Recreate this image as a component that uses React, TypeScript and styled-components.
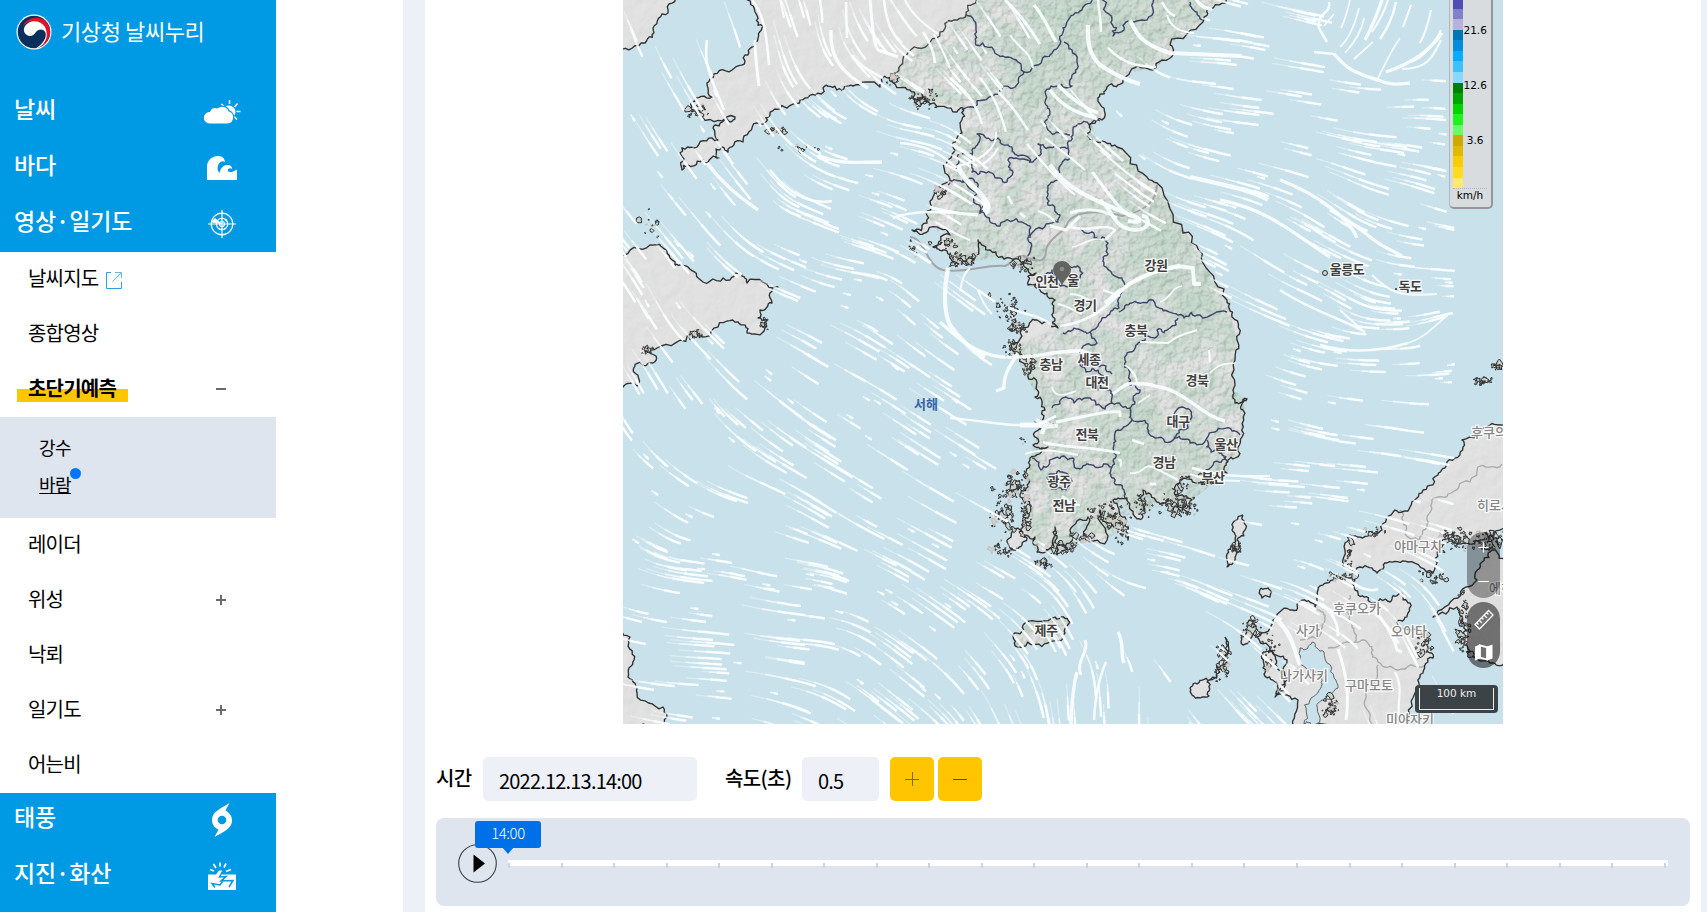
import React, { useMemo } from 'react';
import styled, { createGlobalStyle, css } from 'styled-components';

type Point = [number, number];

const createRandom = (seed: number) => {
  let value = seed;
  return () => {
    value = (value * 16807) % 2147483647;
    return value / 2147483647;
  };
};

const parse = (points: string): Point[] =>
  points.split(' ').map((p) => p.split(',').map(Number) as Point);

// subdivides a coarse outline so it looks like a surveyed coast
const roughen = (points: Point[], amount: number, seed: number): Point[] => {
  const random = createRandom(seed * 7919);
  random();
  let result = points;
  for (let step = 0; step < 3; step++) {
    const next: Point[] = [];
    for (let i = 0; i < result.length - 1; i++) {
      const [ax, ay] = result[i];
      const [bx, by] = result[i + 1];
      const length = Math.hypot(bx - ax, by - ay);
      next.push(result[i]);
      if (length > 3.2) {
        const shift = (random() - 0.5) * Math.min(length, 14) * amount;
        next.push([
          (ax + bx) / 2 - ((by - ay) / length) * shift,
          (ay + by) / 2 + ((bx - ax) / length) * shift,
        ]);
      }
    }
    next.push(result[result.length - 1]);
    result = next;
  }
  return result;
};

const toPath = (points: Point[]) =>
  'M' + points.map(([x, y]) => `${x.toFixed(1)},${y.toFixed(1)}`).join('L');

const MAINLAND =
  '740,-4 755,12 763,26 755,42 745,55 732,70 710,79 708,88 712,97 692,102 692,112 702,117 735,117 723,120 713,128 718,140 697,147 680,153 682,170 688,165 707,163 719,158 716,149 722,147 728,152 743,142 757,123 770,115 787,108 805,98 823,88 837,90 853,86 880,87 889,78 893,80 910,90 917,103 923,92 930,104 957,112 963,108 960,123 962,133 953,147 945,173 952,183 933,197 926,213 927,223 912,230 928,231 950,235 933,247 945,250 957,263 975,257 978,240 990,250 1010,258 1024,262 1036,273 1028,285 1040,290 1047,293 1055,300 1053,317 1058,328 1037,320 1023,327 1010,347 1016,352 1023,363 1028,377 1037,383 1035,397 1045,410 1035,422 1055,427 1035,432 1033,445 1048,447 1030,458 1023,475 1028,487 1022,498 1029,510 1023,527 1035,537 1037,552 1050,548 1055,527 1057,545 1067,550 1070,530 1088,517 1080,540 1107,540 1100,510 1110,523 1128,540 1125,517 1113,500 1127,498 1133,514 1143,517 1143,490 1157,502 1170,503 1187,515 1192,500 1175,495 1180,480 1197,483 1215,483 1227,473 1228,460 1235,458 1242,437 1243,410 1247,399 1235,403 1233,390 1236,350 1237,340 1232,317 1227,300 1203,263 1183,233 1157,183 1147,177 1117,147 1097,142 1090,132 1092,123 1102,120 1098,98 1107,87 1123,80 1130,72 1153,70 1173,52 1170,45 1203,22 1207,10 1229,-4';

const KOREA =
  '889,78 900,66 918,48 940,32 962,18 982,-4 1229,-4 1207,10 1203,22 1170,45 1173,52 1153,70 1130,72 1107,87 1098,98 1102,120 1092,123 1097,142 1117,147 1147,177 1157,183 1203,263 1227,300 1237,340 1233,390 1247,399 1242,437 1227,473 1192,500 1143,510 1107,540 1037,552 1023,527 1030,458 1045,410 1010,347 1058,328 1047,293 1010,258 957,263 926,213 952,183 945,173 962,133 963,108 917,98';

const COASTS = [
  '680,-4 668,13 653,28 645,43 619,51 619,-4',
  '619,253 650,245 662,247 675,265 688,267 703,282 730,280 738,273 747,283 778,287 770,293 772,303 760,310 758,318 767,320 765,328 747,333 738,322 727,321 702,337 692,333 657,348 645,350 656,356 653,363 640,362 635,373 637,386 619,389',
  '619,618 630,637 634,660 628,677 637,693 663,707 667,728 619,728',
  '1507,423 1490,425 1462,440 1463,447 1447,462 1438,475 1423,490 1410,507 1395,510 1382,530 1370,535 1350,535 1345,543 1350,570 1360,567 1377,573 1387,563 1408,562 1433,573 1442,547 1453,532 1463,543 1480,540 1507,530',
  '1353,577 1333,580 1318,590 1315,607 1300,601 1290,610 1273,620 1257,637 1270,650 1287,660 1287,680 1275,697 1298,700 1290,728 1409,728 1415,693 1423,673 1433,658 1428,647 1423,632 1397,622 1408,613 1410,603 1400,593 1390,602 1370,602 1358,593 1355,580 1353,577',
  '1507,566 1492,550 1482,562 1477,580 1458,598 1433,617 1457,607 1462,620 1462,640 1473,657 1490,663 1507,662',
  '1013,635 1025,623 1055,617 1070,622 1065,633 1048,643 1022,647 1013,635',
  '1243,515 1246,528 1237,540 1240,548 1233,563 1227,567 1228,550 1234,543 1232,530 1243,515',
  '1225,637 1225,660 1228,664 1217,677 1207,682 1209,696 1192,695 1195,683 1210,680 1223,660 1225,637',
  '1263,652 1270,650 1274,665 1284,680 1276,694 1273,680 1263,668 1263,652',
  '1007,540 1020,530 1027,538 1022,545 1010,548 1007,540',
  '1261,588 1268,588 1270,597 1262,598 1261,588',
  '1249,620 1254,624 1250,640 1243,645 1247,632 1249,620',
];

const BAYS = [
  '1300,648 1312,642 1324,652 1334,678 1338,688 1322,700 1316,724 1304,724 1310,700 1322,684 1318,672 1306,668 1300,648',
];

// province and state borders
const BORDERS = [
  '966,15 976,30 976,45 998,55 1008,57 1024,72 1013,88 1000,90 984,100 962,110',
  '1024,72 1042,60 1054,50 1062,35 1067,22 1082,10 1092,-4',
  '1102,-4 1112,20 1113,36 1124,30 1126,22 1147,20 1155,-4',
  '1064,42 1072,50 1077,60 1072,75 1072,86 1051,86 1046,105 1048,118 1048,130 1062,134 1070,135',
  '1190,2 1197,12 1203,20',
  '1100,121 1078,124 1073,133 1068,148 1055,146 1038,144 1038,156 1030,162 1018,156 1008,145 998,138 985,137 977,134 975,148 972,160 972,172 984,172 1000,178 1007,182 1013,172 1008,160 1016,158 1030,163',
  '972,154 958,155 956,168 962,182 974,180 979,192 980,212 990,222 1000,226 1022,222 1030,226 1028,240 1028,256',
  '948,185 962,182 977,194 980,214',
  '1068,148 1068,160 1060,166 1058,178 1048,190 1048,205 1060,215 1058,222 1046,224 1030,238',
  '1080,228 1092,232 1094,238 1108,243 1108,254 1104,266 1112,274 1122,278 1121,290 1119,308 1108,315 1090,332 1078,329 1063,333',
  '1119,312 1132,303 1155,303 1167,311 1184,318 1200,315 1227,312',
  '1090,332 1097,343 1082,348 1080,365 1086,372 1098,370 1105,378 1098,390 1110,390 1112,403',
  '1178,318 1170,328 1157,330 1155,338 1140,342 1130,352 1125,360 1130,372 1129,384 1140,390 1135,402 1130,408 1112,403 1105,409 1096,405 1090,398 1074,403 1066,397 1052,408',
  '1130,408 1132,420 1118,430 1114,445 1116,455 1112,467 1095,467 1080,469 1073,458 1064,456 1055,458 1048,466 1041,470 1032,458',
  '1112,467 1114,478 1124,490 1125,498',
  '1132,420 1148,424 1155,438 1175,438 1190,443 1207,438 1215,432 1232,431 1240,435',
  '1207,440 1211,452 1224,456 1228,462',
  '1174,415 1182,407 1190,410 1188,428 1174,438',
  '1082,365 1090,360 1106,366 1112,374',
  '1047,478 1052,474 1066,473 1072,481 1066,490 1052,489 1047,478',
  '1040,278 1052,270 1060,286 1068,287 1080,278 1080,268 1068,266',
  '1198,475 1206,470 1214,462 1226,456',
];

const FAINT_BORDERS = [
  '1400,510 1405,532 1420,540 1428,522 1432,500 1448,494 1470,482 1480,466 1502,464',
  '1350,595 1347,612 1352,625 1355,642 1364,640 1373,650 1378,662 1398,670 1425,665',
  '1328,648 1340,645 1355,642',
  '1378,665 1375,682 1365,700 1372,724',
  '1316,608 1325,620 1320,635 1300,640',
];

const DMZ =
  'M910,237 C925,238 926,266 943,270 C965,274 985,264 1005,266 C1015,262 1012,256 1024,256 C1036,262 1046,264 1046,250 C1048,238 1066,232 1068,222 C1078,208 1110,212 1122,216 C1145,212 1157,200 1157,185';

const ISLANDS: [number, number, number, number, number][] = [
  [962, 259, 12, 6, 46],
  [945, 243, 12, 5, 16],
  [1023, 263, 12, 7, 34],
  [1008, 306, 15, 12, 34],
  [1018, 326, 9, 7, 34],
  [1014, 348, 8, 10, 30],
  [1029, 365, 6, 11, 26],
  [1015, 485, 12, 12, 54],
  [1026, 510, 4, 24, 36],
  [1002, 515, 12, 20, 36],
  [1005, 550, 12, 6, 22],
  [1060, 548, 14, 5, 40],
  [1044, 563, 9, 5, 26],
  [1085, 537, 14, 4, 20],
  [1108, 515, 20, 12, 50],
  [1122, 530, 7, 12, 26],
  [1143, 505, 10, 12, 26],
  [1178, 505, 16, 9, 76],
  [1182, 484, 8, 8, 18],
  [1208, 482, 10, 4, 18],
  [922, 100, 14, 9, 34],
  [893, 80, 5, 5, 14],
  [778, 131, 10, 3, 18],
  [797, 148, 20, 3, 10],
  [698, 110, 10, 6, 22],
  [650, 225, 12, 14, 12],
  [913, 250, 4, 9, 10],
  [1235, 547, 5, 4, 26],
  [1222, 665, 6, 16, 34],
  [1250, 630, 10, 10, 28],
  [1270, 650, 9, 16, 24],
  [1455, 540, 14, 11, 54],
  [1490, 540, 14, 9, 60],
  [1435, 577, 12, 5, 24],
  [1463, 620, 6, 30, 44],
  [1425, 645, 8, 12, 26],
  [1330, 705, 9, 10, 34],
  [1375, 531, 10, 4, 14],
  [1340, 577, 14, 4, 18],
  [1350, 555, 4, 16, 14],
  [1484, 381, 7, 4, 26],
  [1498, 367, 4, 4, 12],
  [940, 191, 7, 6, 18],
  [1020, 442, 7, 4, 4],
  [765, 326, 5, 6, 10],
  [695, 334, 6, 4, 18],
  [648, 350, 6, 4, 14],
];

const TREND: [number, number, number, number][] = [
  [650, 10, 1, 2.5],
  [720, 20, 1, 2.8],
  [670, 110, 1, 1.7],
  [740, 110, 1, 1.8],
  [760, 50, 0.2, 1],
  [830, 20, 0.15, 1],
  [845, 80, 1, 1.2],
  [880, 30, 0.6, 1],
  [910, 70, 1, 0.6],
  [850, 125, 1, 0.45],
  [750, 180, 1, 1.3],
  [700, 170, 1, 1.4],
  [800, 230, 1, 0.35],
  [860, 160, 1, 0.15],
  [910, 130, 1, 0.15],
  [680, 220, 1, 1.2],
  [660, 300, 1, 1.9],
  [700, 320, 1, 1],
  [780, 300, 1, 0.4],
  [850, 275, 1, 0.15],
  [910, 310, 1, 0.9],
  [650, 400, 1, 2],
  [700, 400, 1, 1.3],
  [760, 400, 1, 0.8],
  [850, 370, 1, 0.55],
  [900, 430, 1, 0.65],
  [650, 510, 1, 0.7],
  [740, 520, 1, 0.3],
  [830, 500, 1, 0.65],
  [700, 570, 1, 0.1],
  [800, 575, 1, 0.15],
  [880, 560, 1, 0.5],
  [930, 610, 1, 0.7],
  [700, 660, 1, 0.05],
  [800, 630, 1, 0.08],
  [890, 680, 1, 0.8],
  [960, 540, 1, 0.5],
  [1000, 580, 1, 0.55],
  [990, 650, 1, 1.2],
  [1020, 700, 1, 2.6],
  [1070, 700, 0, 1],
  [1130, 700, -0.1, 1],
  [1090, 620, 0.5, 1],
  [1180, 630, 1, 0.5],
  [1150, 570, 1, 0.15],
  [1250, 590, 1, 0.35],
  [1260, 550, 1, 0.15],
  [1280, 490, 1, 0.03],
  [1350, 470, 1, 0.08],
  [1400, 420, 1, 0.15],
  [1300, 400, 1, 0.3],
  [1260, 350, 1, 0.45],
  [1350, 370, 1, 0.06],
  [1380, 345, 1, -0.05],
  [1435, 340, 1, -0.45],
  [1430, 400, 1, 0.02],
  [1260, 250, 1, 0.65],
  [1340, 300, 1, 0.6],
  [1220, 180, 1, 0.25],
  [1330, 210, 1, 0.7],
  [1250, 120, 1, 0.1],
  [1200, 60, 1, 0.03],
  [1300, 100, 1, 0.15],
  [1300, 150, 1, 0.25],
  [1400, 110, 1, -0.05],
  [1410, 150, 1, 0.15],
  [1430, 190, 1, 0.35],
  [1430, 270, 1, 0.08],
  [1340, 610, 1, 0.6],
  [1380, 680, 0.3, 1],
  [1200, 690, 0.8, 1],
  [1430, 640, 0.5, 1],
  [1420, 500, 1, 0.3],
  [1240, 660, 1, 1],
  [1020, 40, 1, 1.8],
  [950, 50, 1, 1.6],
  [1000, 110, 1, 1.2],
  [1090, 60, 1, 1.8],
  [1130, 40, 1, 0.9],
  [1060, 120, 1, 1.1],
  [1100, 170, 1, 0.9],
];

const trendAt = (x: number, y: number): Point => {
  let sx = 0;
  let sy = 0;
  TREND.forEach(([px, py, dx, dy]) => {
    const length = Math.hypot(dx, dy);
    const weight = 1 / Math.pow((px - x) ** 2 + (py - y) ** 2 + 400, 1.5);
    sx += (dx / length) * weight;
    sy += (dy / length) * weight;
  });
  const total = Math.hypot(sx, sy);
  return [sx / total, sy / total];
};

const isCalm = (x: number, y: number) => {
  if (x > 1430) return y < 220 || y > 400;
  if (x > 1300 && y < 75) return true;
  if (x > 955 && x < 1085 && y > 125 && y < 515) return true;
  if (x > 965 && x < 1232 && y > 185 && y < 515) {
    return x > 1000 && !(x > 1150 && y < 205 + (x - 1150) * 1.2);
  }
  if (x > 930 && x < 1010 && y > 170 && y < 270) return true;
  return x > 1090 && x < 1190 && y > 590 && y < 640;
};

const isInland = (x: number, y: number) =>
  (x > 900 && x < 1170 - y * 0.5 && y < 125) || (x > 1310 && x < 1430 && y > 600);

const trace = (startX: number, startY: number, length: number) => {
  let x = startX;
  let y = startY;
  const line: Point[] = [[x, y]];
  for (let travelled = 0; travelled < length; travelled += 4) {
    const [dx, dy] = trendAt(x, y);
    x += dx * 4;
    y += dy * 4;
    if (x > 1455 || (x > 1447 && y < 215)) break;
    line.push([x, y]);
  }
  return line;
};

const buildStreaks = () => {
  const random = createRandom(20221213);
  const streaks: Point[][] = [];
  for (let gy = -20; gy < 730; gy += 26) {
    for (let gx = 605; gx < 1445; gx += 34) {
      const x = gx + random() * 40;
      const y = gy + random() * 34;
      const base = 24 + random() * 36;
      const skip = random();
      const siblings = 1 + Math.floor(random() * 2.9);
      const thin = isInland(x, y) ? 0.72 : x < 760 && y < 620 ? 0.38 : 0.1;
      if (isCalm(x, y) || skip < thin) continue;
      const [dx, dy] = trendAt(x, y);
      for (let i = 0; i < siblings; i++) {
        const side = i * (3.5 + random() * 5);
        const along = (random() - 0.3) * 26;
        const length = random() < 0.12 ? 7 : base * (0.7 + random() * 0.5);
        const line = trace(x - dy * side + dx * along, y + dx * side + dy * along, length);
        if (line.length > 2) streaks.push(line);
      }
    }
  }
  return streaks;
};

const GUSTS: [string, number][] = [
  ['M948,268 C944,290 943,310 950,325 C960,340 972,350 985,357', 5],
  ['M970,268 C962,275 962,283 960,291', 2.5],
  ['M978,290 C982,302 986,308 992,314', 2.5],
  ['M1018,353 C1010,366 1003,375 1004,388 L996,391', 4],
  ['M940,322 C965,345 985,360 1018,357 C1040,357 1060,350 1079,351', 4],
  ['M1079,350 L1092,355', 5],
  ['M1060,326 C1090,322 1105,308 1118,295 C1130,280 1145,272 1180,267', 3],
  ['M1105,303 C1125,285 1145,272 1178,266 L1193,268 L1194,284 L1201,284', 4.5],
  ['M1160,302 C1172,298 1170,288 1182,286', 2],
  ['M1070,294 C1080,294 1085,298 1092,302', 2.5],
  ['M1103,290 L1120,296', 2.5],
  ['M1058,304 C1068,306 1075,311 1082,314', 2.5],
  ['M1009,308 C1025,315 1040,315 1052,325', 3],
  ['M958,165 C963,185 985,190 986,206', 6],
  ['M982,200 C988,203 988,209 984,212', 9],
  ['M958,166 C985,160 998,145 996,132', 2.5],
  ['M983,164 C990,160 994,155 998,148', 2.5],
  ['M900,143 C925,145 942,153 956,168', 3],
  ['M1008,196 L1012,204', 3],
  ['M1020,213 L1025,217', 3],
  ['M1038,211 C1048,214 1052,218 1055,222', 2.5],
  ['M1050,165 C1070,195 1110,205 1130,215 C1145,220 1140,223 1128,221', 5],
  ['M1100,200 C1115,212 1112,228 1135,230 C1151,230 1151,216 1142,216', 4.5],
  ['M1092,172 C1108,192 1115,205 1130,216', 3.5],
  ['M1070,213 C1085,208 1100,208 1117,218', 3.5],
  ['M1070,227 C1090,233 1105,222 1115,230 L1105,240', 3],
  ['M1072,247 C1085,245 1090,236 1104,240', 2],
  ['M1027,144 C1040,160 1055,178 1075,195', 2.5],
  ['M1045,138 C1058,148 1068,155 1085,170', 2.5],
  ['M1115,174 L1140,192', 2.5],
  ['M1100,150 L1128,174', 2.5],
  ['M1050,226 L1066,230 L1080,216', 3.5],
  ['M930,207 C950,214 970,214 978,215', 4],
  ['M893,218 C915,210 935,212 960,213', 3],
  ['M935,222 C950,230 958,236 970,240', 2.5],
  ['M1088,25 C1087,45 1090,55 1100,65 C1115,75 1125,80 1140,84', 5],
  ['M1130,20 C1138,38 1145,45 1170,53 L1242,56', 5],
  ['M1108,48 C1122,62 1135,67 1156,67', 3],
  ['M1098,-2 C1098,8 1101,18 1101,32', 3],
  ['M1162,2 C1166,10 1170,14 1175,16', 3],
  ['M1195,-2 C1200,6 1205,9 1212,9', 4],
  ['M1167,15 C1170,26 1178,32 1194,33', 2.5],
  ['M1050,90 C1063,108 1080,114 1096,118', 4],
  ['M1058,85 C1072,100 1085,108 1098,113', 4],
  ['M950,78 C965,90 975,100 982,124', 3],
  ['M980,78 C992,92 1000,110 1006,132', 3],
  ['M998,92 C1010,103 1018,115 1028,130', 3],
  ['M1010,35 C1020,50 1030,50 1033,68', 2.5],
  ['M1005,0 C1018,12 1028,25 1040,44', 3.5],
  ['M1034,5 C1045,18 1048,28 1056,42', 4],
  ['M923,32 C930,42 934,52 935,63', 3],
  ['M934,34 C942,48 946,58 950,68', 2.5],
  ['M831,30 C829,60 845,75 868,88', 4],
  ['M852,55 C858,65 868,70 883,78', 3],
  ['M870,0 C873,30 873,42 878,50 L898,57', 3.5],
  ['M884,0 C886,20 892,35 902,43', 3],
  ['M905,0 C912,15 925,25 938,34', 2.5],
  ['M846,2 L847,38', 3],
  ['M820,0 C821,10 823,15 822,23', 3],
  ['M752,0 C765,15 767,40 769,65', 3],
  ['M755,40 C755,58 757,70 759,86', 3.5],
  ['M707,40 C703,65 712,80 724,110', 3],
  ['M780,-2 L784,18', 2.5],
  ['M707,163 C722,183 738,196 758,210', 4],
  ['M770,170 C790,195 810,205 832,201', 3],
  ['M818,155 C840,165 855,162 882,162', 4],
  ['M1052,387 C1055,400 1068,394 1076,391', 2],
  ['M1113,394 C1125,385 1128,382 1132,384', 3.5],
  ['M1132,384 C1145,383 1150,384 1155,386 C1185,390 1200,415 1225,421', 4],
  ['M1125,365 C1135,372 1137,380 1137,384', 2.5],
  ['M1138,403 L1150,395', 2],
  ['M1056,422 C1080,418 1105,410 1120,412 L1120,417', 3.5],
  ['M950,418 C980,420 1010,428 1040,424 L1056,416', 3],
  ['M1020,425 L1042,425', 6],
  ['M1036,420 L1046,424 L1056,426 L1044,427 L1042,434', 5],
  ['M1043,442 C1060,448 1090,446 1120,453', 3],
  ['M1025,454 C1045,447 1060,452 1078,455', 2.5],
  ['M1118,460 C1122,458 1121,466 1120,466', 3],
  ['M1130,473 C1145,475 1142,462 1155,468 L1178,480', 2.5],
  ['M1192,468 C1210,472 1225,478 1270,476', 3],
  ['M1190,474 C1205,480 1215,480 1240,481', 2.5],
  ['M1210,373 C1220,362 1228,364 1236,363', 2],
  ['M1209,350 L1210,362', 2.5],
  ['M1132,440 L1144,444', 3],
  ['M1150,484 L1156,484', 3],
  ['M1062,496 C1068,500 1070,505 1080,505', 3],
  ['M1140,342 L1168,343 C1180,333 1190,333 1197,330', 2.5],
  ['M1275,618 C1290,630 1295,650 1300,665', 5],
  ['M1338,649 C1345,670 1350,690 1346,720', 3.5],
  ['M1322,604 C1335,615 1338,625 1338,636', 3.5],
  ['M1375,610 C1390,630 1395,640 1397,650 L1402,652', 3.5],
  ['M1395,672 C1405,690 1395,705 1400,722', 2.5],
  ['M1355,585 C1365,590 1372,592 1378,589', 3],
  ['M1085,640 C1090,652 1075,660 1081,675', 3.5],
  ['M1077,672 C1072,690 1072,705 1071,724', 4],
  ['M1118,632 C1125,645 1120,655 1124,663', 4],
  ['M1106,662 C1098,680 1095,700 1094,720', 3],
  ['M1329,2 C1332,14 1316,12 1319,28 L1327,42', 3],
  ['M1314,52 L1334,54', 3],
  ['M1334,54 C1345,65 1345,70 1378,80 C1390,86 1400,84 1410,83', 4],
  ['M1378,78 C1385,65 1390,52 1400,38', 2],
  ['M1386,72 C1415,62 1430,50 1442,33', 4],
  ['M1402,69 C1425,69 1432,60 1441,40', 2.5],
  ['M1411,62 C1422,58 1432,48 1441,30', 2],
  ['M1420,43 C1427,30 1429,20 1431,10', 2.5],
  ['M1403,27 L1411,5', 2.5],
  ['M1380,39 C1390,25 1394,12 1396,2', 3],
  ['M1365,40 C1373,25 1378,12 1382,0', 4],
  ['M1372,32 C1380,20 1385,10 1388,0', 2.5],
  ['M1340,47 C1348,40 1354,28 1359,8', 2],
  ['M1345,53 C1355,42 1362,30 1364,18', 2],
  ['M1354,59 L1373,42', 2],
  ['M1341,28 C1346,18 1348,8 1350,0', 2],
  ['M1324,26 L1334,14', 2],
  ['M1190,177 C1225,185 1250,190 1268,200', 5],
  ['M1220,200 C1270,210 1295,235 1330,257', 4],
  ['M1280,180 C1320,195 1350,220 1357,238', 4],
  ['M1330,210 C1360,225 1370,240 1385,247 L1402,256', 4],
  ['M1320,345 C1355,355 1385,350 1408,343', 3],
  ['M1408,343 C1425,338 1435,325 1448,315', 2],
  ['M1372,275 C1390,293 1400,297 1437,294', 2.5],
  ['M1280,290 C1310,310 1340,318 1365,332', 3],
  ['M1340,310 L1362,330', 2.5],
];

const PLACES: { name: string; x: number; y: number; tone?: 'sea' | 'abroad' }[] = [
  { name: '강원', x: 1156, y: 265 },
  { name: '인천', x: 1047, y: 281 },
  { name: '울', x: 1073, y: 280 },
  { name: '경기', x: 1085, y: 305 },
  { name: '충북', x: 1136, y: 330 },
  { name: '충남', x: 1051, y: 364 },
  { name: '세종', x: 1089, y: 359 },
  { name: '대전', x: 1097, y: 382 },
  { name: '경북', x: 1197, y: 380 },
  { name: '대구', x: 1178, y: 421 },
  { name: '전북', x: 1087, y: 434 },
  { name: '울산', x: 1226, y: 444 },
  { name: '경남', x: 1164, y: 462 },
  { name: '부산', x: 1213, y: 477 },
  { name: '광주', x: 1059, y: 481 },
  { name: '전남', x: 1064, y: 505 },
  { name: '제주', x: 1046, y: 630 },
  { name: '울릉도', x: 1347, y: 269 },
  { name: '독도', x: 1410, y: 286 },
  { name: '서해', x: 926, y: 404, tone: 'sea' },
  { name: '후쿠의', x: 1489, y: 432, tone: 'abroad' },
  { name: '히로시', x: 1495, y: 505, tone: 'abroad' },
  { name: '야마구치', x: 1418, y: 546, tone: 'abroad' },
  { name: '후쿠오카', x: 1357, y: 608, tone: 'abroad' },
  { name: '오이타', x: 1409, y: 631, tone: 'abroad' },
  { name: '사가', x: 1308, y: 630, tone: 'abroad' },
  { name: '나가사키', x: 1304, y: 675, tone: 'abroad' },
  { name: '구마모토', x: 1369, y: 685, tone: 'abroad' },
  { name: '미야자키', x: 1410, y: 719, tone: 'abroad' },
  { name: '에히', x: 1501, y: 588, tone: 'abroad' },
];

const LEGEND_COLORS = [
  '#4e4eb4', '#8181c8', '#b3b3dd', '#0077b3', '#008ddd', '#07abff', '#3ec1ff', '#87d9ff', '#008000',
  '#00a400', '#00d500', '#1ef31e', '#69fc69', '#ccaa00', '#e0b900', '#f9cd00', '#ffdc1f', '#ffea6e',
];

const islandShapes = () => {
  const random = createRandom(7713);
  const shapes: { d: string; faint: boolean }[] = [];
  ISLANDS.forEach(([cx, cy, rx, ry, count]) => {
    for (let i = 0; i < count; i++) {
      const x = cx + (random() + random() - 1) * rx * 1.3;
      const y = cy + (random() + random() - 1) * ry * 1.3;
      const size = 0.5 + random() * random() * random() * 6;
      const corners: Point[] = [];
      for (let c = 0; c < 8; c++) {
        const angle = (c / 8) * Math.PI * 2;
        const radius = size * (0.25 + random() * 1.15);
        corners.push([x + Math.cos(angle) * radius, y + Math.sin(angle) * radius]);
      }
      shapes.push({ d: toPath(corners) + 'Z', faint: random() < 0.12 });
    }
  });
  return shapes;
};

const WindMap: React.FC = () => {
  const mainland = useMemo(() => toPath(roughen(parse(MAINLAND), 0.7, 31)), []);
  const coasts = useMemo(
    () => COASTS.map((coast, i) => toPath(roughen(parse(coast), 0.6, 100 + i * 7))),
    [],
  );
  const borders = useMemo(
    () => BORDERS.map((border, i) => toPath(roughen(parse(border), 0.6, 400 + i * 13))),
    [],
  );
  const streaks = useMemo(buildStreaks, []);
  const islands = useMemo(islandShapes, []);

  return (
    <MapSvg viewBox="623 0 880 724">
      <defs>
        <filter id="relief" x="0" y="0" width="100%" height="100%" colorInterpolationFilters="sRGB">
          <feTurbulence type="fractalNoise" baseFrequency="0.06" numOctaves="3" seed="4" />
          <feDiffuseLighting surfaceScale="1.4" lightingColor="#ffffff">
            <feDistantLight azimuth="225" elevation="68" />
          </feDiffuseLighting>
        </filter>
        <filter id="ridges" x="0" y="0" width="100%" height="100%" colorInterpolationFilters="sRGB">
          <feTurbulence type="fractalNoise" baseFrequency="0.16" numOctaves="4" seed="21" />
          <feDiffuseLighting surfaceScale="3" lightingColor="#ffffff">
            <feDistantLight azimuth="225" elevation="62" />
          </feDiffuseLighting>
        </filter>
        <filter id="forest" x="0" y="0" width="100%" height="100%" colorInterpolationFilters="sRGB">
          <feTurbulence type="fractalNoise" baseFrequency="0.045" numOctaves="5" seed="9" />
          <feColorMatrix values="0 0 0 0 0.7 0 0 0 0 0.81 0 0 0 0 0.74 3.4 0 0 0 -1.1" />
        </filter>
        <filter id="soft">
          <feGaussianBlur stdDeviation="14" />
        </filter>
        <clipPath id="land">
          <path d={mainland} />
          {coasts.map((d) => (
            <path key={d} d={d} />
          ))}
        </clipPath>
        <clipPath id="korea">
          <path d={toPath(parse(KOREA)) + 'Z'} />
          <path d={coasts[6]} />
        </clipPath>
      </defs>
      <rect x="623" width="880" height="724" fill="#c8e1ea" />
      <g fill="#dedede">
        <path d={mainland} />
        {coasts.map((d) => (
          <path key={d} d={d} />
        ))}
      </g>
      <g clipPath="url(#land)" opacity="0.2">
        <rect x="623" width="880" height="724" filter="url(#relief)" />
      </g>
      <g clipPath="url(#korea)">
        <g fill="#bdd3c4" opacity="0.75" filter="url(#soft)">
          <ellipse cx="1100" cy="20" rx="75" ry="42" />
          <ellipse cx="1040" cy="70" rx="40" ry="35" />
          <ellipse cx="1150" cy="245" rx="30" ry="60" />
          <ellipse cx="1195" cy="300" rx="24" ry="50" />
          <ellipse cx="1130" cy="440" rx="26" ry="50" />
          <ellipse cx="1200" cy="455" rx="26" ry="18" />
          <ellipse cx="1045" cy="632" rx="16" ry="8" />
        </g>
        <rect x="890" width="360" height="660" filter="url(#forest)" opacity="0.65" />
        <g opacity="0.2">
          <rect x="890" width="360" height="660" filter="url(#ridges)" />
        </g>
      </g>
      <g fill="#c8e1ea" stroke="#555" strokeWidth="0.9">
        {BAYS.map((bay, i) => (
          <path key={bay} d={toPath(roughen(parse(bay), 0.6, 900 + i))} />
        ))}
      </g>
      <g fill="none" stroke="#a9a9a9" strokeWidth="1.3">
        {FAINT_BORDERS.map((border, i) => (
          <path key={border} d={toPath(roughen(parse(border), 0.5, 700 + i))} />
        ))}
      </g>
      <path d={DMZ} fill="none" stroke="#a5a5a9" strokeWidth="2" />
      <g fill="none" stroke="#3f4467" strokeWidth="1.4" strokeLinejoin="round">
        {borders.map((d) => (
          <path key={d} d={d} />
        ))}
      </g>
      <path
        d={toPath(roughen(parse('889,78 900,66 918,48 940,32 954,20 966,15 976,0 982,-4'), 0.6, 55))}
        fill="none"
        stroke="#444"
        strokeWidth="1.3"
      />
      <g fill="none" stroke="#303030" strokeWidth="1.35" strokeLinejoin="round">
        <path d={mainland} />
        {coasts.map((d) => (
          <path key={d} d={d} />
        ))}
      </g>
      {islands.map(({ d, faint }) => (
        <path
          key={d}
          d={d}
          fill={faint ? '#d3cec9' : '#c9d3ce'}
          stroke={faint ? '#c5bfba' : '#2b2b2b'}
          strokeWidth="1"
        />
      ))}

      <g fill="none" stroke="#fafeff" strokeLinejoin="round">
        {streaks.map((line) => {
          const middle = line.slice(Math.floor(line.length * 0.3));
          const head = line.slice(Math.floor(line.length * 0.55));
          return (
            <g key={toPath(line)}>
              <path d={toPath(line)} strokeWidth="1.3" opacity="0.4" />
              <path d={toPath(middle)} strokeWidth="1.8" opacity="0.6" />
              <path d={toPath(head)} strokeWidth="2.5" opacity="0.85" />
            </g>
          );
        })}
        {GUSTS.map(([d, width]) => (
          <path key={d} d={d} strokeWidth={width * 0.85} opacity="0.92" />
        ))}
      </g>

      {PLACES.map(({ name, x, y, tone }) => (
        <PlaceName key={name} x={x} y={y + 4.5} $tone={tone}>
          {name}
        </PlaceName>
      ))}

      <path
        d="M1062,286 C1060,279 1053,276 1053,269.500 A9,8.500 0 1 1 1071,269.500 C1071,276 1064,279 1062,286Z"
        fill="#636363"
      />
      <circle cx="1062" cy="269" r="2.300" fill="#8c8c8c" />
      <circle cx="1325" cy="273" r="2.500" fill="#c9d3ce" stroke="#333" />
      <circle cx="1396" cy="289" r="1" fill="#333" />
    </MapSvg>
  );
};

const EmblemIcon = () => (
  <svg width="36" height="36" viewBox="0 0 36 36">
    <circle cx="18" cy="18" r="17.500" fill="#fff" />
    <circle cx="18" cy="18" r="16.300" fill="#0b2f5c" />
    <path
      d="M7,12 C11,2.500 25,0.500 32,10 C37,19 33,29 23.500,33.500 C30,27 31,20 29,14 C25,6 14,4 7,12Z"
      fill="#e4112e"
    />
    <path
      d="M8.500,13 C12.500,5.500 24,5 29,13 C33,22 30,29 23,33.500 L20,34.300 C27,30 31,24 29.500,18.500 C27.500,14 22,15 19.500,18.500 C17.500,22.500 12.500,23 9.500,20 C7.500,18 7.500,15 8.500,13Z"
      fill="#fff"
    />
  </svg>
);

const WeatherIcon = () => (
  <svg width="40" height="28" viewBox="0 0 40 28">
    <g stroke="#fff" strokeWidth="1.5">
      <path d="M27.500,2v4M35.500,5.500l-3,3.500M34.500,13.500h4M32,18.500l3,3M19.500,6l3,3" />
    </g>
    <circle cx="27" cy="14" r="6.500" fill="#fff" />
    <path
      d="M7.500,26 a6.300,6.300 0 0 1 0,-12.600 c1,-3.200 4.500,-5 7.800,-3.500 c3.500,-3 10.200,-2 11.700,3 a6.700,6.700 0 0 1 -1.500,13.100z"
      fill="#fff"
      stroke="#0099e3"
      strokeWidth="1.200"
    />
  </svg>
);

const SeaIcon = () => (
  <svg width="32" height="26" viewBox="0 0 32 26">
    <path
      d="M1,25 V12 C1,5 6,1 12,1 C16,1 18.500,3 19,7 C17,5.500 13.500,6.500 12.200,10 C11,13 11.500,16 13.500,18 C14.500,13 17.500,10 21.500,10 C25,10 26,12 26.200,14 C24,12.500 21.300,13.500 22,15.800 C23,18.500 28,16.500 31,14.500 V25Z"
      fill="#fff"
    />
  </svg>
);

const RadarIcon = () => (
  <svg width="30" height="30" viewBox="0 0 30 30">
    <g fill="none" stroke="#fff" strokeWidth="1.2">
      <circle cx="15" cy="15" r="10.800" />
      <circle cx="15" cy="15" r="5.700" />
      <circle cx="15" cy="15" r="2.500" />
      <path d="M15,1v28M1,15h28" />
    </g>
    <path d="M15,15 L4.500,13.500 A11,11 0 0 1 8,9Z" fill="#fff" />
    <circle cx="19" cy="11" r="1.200" fill="#fff" />
  </svg>
);

const TyphoonIcon = () => (
  <svg width="24" height="36" viewBox="0 0 24 36">
    <path
      d="M19.500,1 L15.500,8.500 C20,11 22,14.500 22,18.500 C22,26.500 14,29.500 4.500,35 L8.500,27.500 C4,25.500 2,22 2,18 C2,9.500 11,6.500 19.500,1Z"
      fill="#fff"
    />
    <circle cx="12" cy="18" r="4.300" fill="#0099e3" />
  </svg>
);

const EarthquakeIcon = () => (
  <svg width="30" height="30" viewBox="0 0 30 30">
    <path d="M1,13.500 H9 L12,9.500 H15 V13.500 H29 V29 H1Z" fill="#fff" />
    <g stroke="#fff" strokeWidth="1.700">
      <path d="M13,1.500v4M6.500,3l2.500,4M3,8.500l4,1.500M19,2.500l-2,4M24,8.500l-5,2" />
    </g>
    <path
      d="M17,8 L12.500,16 L19,15.500 L14,20 L26,19.500 L22,26 M17,18.500 L13,24 L5,22.500 L8,26.500"
      fill="none"
      stroke="#0099e3"
      strokeWidth="1.500"
    />
  </svg>
);

const OutlinkIcon = () => (
  <svg width="18" height="18" viewBox="0 0 18 18" fill="none" stroke="#2c9fe0">
    <path d="M6,1.500 H1.500 V17.500 H16.500 V11" />
    <path d="M10,1.500 H16.500 V7 M16,2 L7.500,10.500" stroke="#63b9ea" />
  </svg>
);

const MENU = [
  { label: '날씨', icon: <WeatherIcon /> },
  { label: '바다', icon: <SeaIcon /> },
  { label: '영상·일기도', icon: <RadarIcon /> },
];

const MENU_BOTTOM = [
  { label: '태풍', icon: <TyphoonIcon /> },
  { label: '지진·화산', icon: <EarthquakeIcon /> },
];

const SUB_MENU = [
  { label: '레이더' },
  { label: '위성', expandable: true },
  { label: '낙뢰' },
  { label: '일기도', expandable: true },
  { label: '어는비' },
];

const TICKS = Array.from({ length: 23 }, (_, i) => i);

const Sidebar: React.FC = () => (
  <StyledSidebar>
    <StyledBrand>
      <EmblemIcon />
      <span>기상청 날씨누리</span>
    </StyledBrand>
    {MENU.map(({ label, icon }) => (
      <StyledMenuItem key={label}>
        {label}
        <StyledMenuIcon>{icon}</StyledMenuIcon>
      </StyledMenuItem>
    ))}
    <StyledSubMenu>
      <StyledSubItem>
        <span>날씨지도</span>
        <OutlinkIcon />
      </StyledSubItem>
      <StyledSubItem>
        <span>종합영상</span>
      </StyledSubItem>
      <StyledSubItem $active>
        <StyledMark>초단기예측</StyledMark>
        <StyledToggle />
      </StyledSubItem>
      <StyledDepth>
        <StyledDepthItem>강수</StyledDepthItem>
        <StyledDepthItem $selected>바람</StyledDepthItem>
      </StyledDepth>
      {SUB_MENU.map(({ label, expandable }) => (
        <StyledSubItem key={label}>
          <span>{label}</span>
          {expandable && <StyledToggle $closed />}
        </StyledSubItem>
      ))}
    </StyledSubMenu>
    {MENU_BOTTOM.map(({ label, icon }) => (
      <StyledMenuItem key={label} $bottom>
        {label}
        <StyledMenuIcon>{icon}</StyledMenuIcon>
      </StyledMenuItem>
    ))}
  </StyledSidebar>
);

const App: React.FC = () => {
  return (
    <StyledPage>
      <GlobalStyle />
      <Sidebar />
      <StyledContent>
        <StyledMap>
          <WindMap />
          <StyledLegend>
            <StyledLegendScale>
              <StyledLegendBar>
                {LEGEND_COLORS.map((color) => (
                  <StyledLegendCell key={color} $color={color} />
                ))}
              </StyledLegendBar>
              <StyledLegendValues>
                <span>21.6</span>
                <span>12.6</span>
                <span>3.6</span>
              </StyledLegendValues>
            </StyledLegendScale>
            <StyledLegendUnit>km/h</StyledLegendUnit>
          </StyledLegend>
          <StyledMapTools>
            <StyledPill>
              <svg width="33" height="66" viewBox="0 0 33 66" stroke="#fff" strokeWidth="1.200">
                <path d="M11.500,15.500h10M16.500,10.500v10M11,49.500h11" />
              </svg>
            </StyledPill>
            <StyledPill $dark>
              <svg width="33" height="66" viewBox="0 0 33 66" fill="none" stroke="#fff" strokeWidth="1.300">
                <path d="M21.500,8.500 L26,13 L12.500,27 L8,22.500Z" />
                <path d="M19.500,10.500l2,2M17,13l3,3M14.500,15.500l2,2M12,18l3,3M9.500,20.500l2,2" />
                <path d="M8,44.500 L13,42.500 V56.500 L8,58.500Z M20,44.500 L25.500,42.500 V56.500 L20,58.500Z" fill="#fff" stroke="none" />
                <path d="M13,43.300 L20,45.300 V57.500 L13,55.500Z" strokeWidth="1.800" />
              </svg>
            </StyledPill>
          </StyledMapTools>
          <StyledScale>
            <div>100 km</div>
          </StyledScale>
        </StyledMap>
        <StyledControls>
          <StyledLabel $width={47}>시간</StyledLabel>
          <StyledField $width={214}>2022.12.13.14:00</StyledField>
          <StyledLabel $width={77} $gap={28}>
            속도(초)
          </StyledLabel>
          <StyledField $width={77}>0.5</StyledField>
          <StyledStepper>
            <button aria-label="plus">
              <svg width="14" height="14" viewBox="0 0 14 14" stroke="#7f6a1c">
                <path d="M0,7.500h14M7.500,0v14" />
              </svg>
            </button>
            <button aria-label="minus">
              <svg width="14" height="14" viewBox="0 0 14 14" stroke="#5f4d0c">
                <path d="M0,7.500h14" />
              </svg>
            </button>
          </StyledStepper>
        </StyledControls>
        <StyledPlayer>
          <StyledPlay aria-label="play">
            <svg width="39" height="39" viewBox="0 0 39 39">
              <circle cx="19.500" cy="19.500" r="18.800" fill="none" stroke="#3b3f45" strokeWidth="1.100" />
              <path d="M15.500,10.500 V28.500 L27,19.500Z" />
            </svg>
          </StyledPlay>
          <StyledTrack>
            {TICKS.map((tick) => (
              <i key={tick} />
            ))}
            <StyledTooltip>14:00</StyledTooltip>
          </StyledTrack>
        </StyledPlayer>
      </StyledContent>
    </StyledPage>
  );
};

const GlobalStyle = createGlobalStyle`
  * {
    box-sizing: border-box;
  }
  body {
    margin: 0;
    overflow: hidden;
    font-family: 'Noto Sans CJK KR', sans-serif;
    color: #000;
  }
`;

const StyledPage = styled.div`
  display: flex;
  height: 912px;
  background: #fff;
`;

const StyledSidebar = styled.nav`
  flex: none;
  width: 276px;
  height: 912px;
  overflow: hidden;
  background: #0099e3;
`;

const StyledBrand = styled.div`
  display: flex;
  align-items: center;
  height: 84px;
  padding: 0 0 21px 16px;
  gap: 9px;
  font-size: 22px;
  letter-spacing: -0.4px;
  color: #fff;
  span {
    margin-bottom: 4px;
  }
`;

const StyledMenuItem = styled.div<{ $bottom?: boolean }>`
  display: flex;
  align-items: center;
  justify-content: space-between;
  height: 56px;
  padding: 0 34px ${({ $bottom }) => ($bottom ? 11 : 9)}px 14px;
  font-size: 23px;
  font-weight: 500;
  letter-spacing: -0.1px;
  color: #fff;
`;

const StyledMenuIcon = styled.span`
  display: flex;
  align-items: center;
  justify-content: center;
  width: 40px;
  padding-top: 8px;
`;

const StyledSubMenu = styled.div`
  background: #fff;
`;

const StyledSubItem = styled.div<{ $active?: boolean }>`
  display: flex;
  align-items: center;
  height: 55px;
  padding: 0 50px 4px 28px;
  font-size: 20px;
  font-weight: ${({ $active }) => ($active ? 700 : 400)};
  letter-spacing: -0.8px;
  svg {
    margin: 4px 0 0 7px;
  }
`;

const StyledMark = styled.span`
  margin-left: -11px;
  padding: 0 12px 0 11px;
  height: 28px;
  line-height: 27px;
  background: linear-gradient(transparent 15px, #ffc600 15px);
`;

const StyledToggle = styled.i<{ $closed?: boolean }>`
  width: 10px;
  height: 10px;
  margin-left: auto;
  margin-top: 2px;
  background: linear-gradient(#6a6a6a, #6a6a6a) center / 10px 2px no-repeat
    ${({ $closed }) => $closed && ', linear-gradient(#6a6a6a, #6a6a6a) center / 2px 10px no-repeat'};
`;

const StyledDepth = styled.div`
  display: flex;
  flex-direction: column;
  align-items: flex-start;
  height: 101px;
  padding: 12px 0 0 39px;
  background: #dfe5ef;
`;

const StyledDepthItem = styled.div<{ $selected?: boolean }>`
  position: relative;
  height: 37px;
  line-height: 37px;
  font-size: 18px;
  letter-spacing: -0.6px;
  ${({ $selected }) =>
    $selected &&
    css`
      text-decoration: underline;
      text-decoration-thickness: 1px;
      &::after {
        content: '';
        position: absolute;
        top: 2px;
        right: -10px;
        width: 11px;
        height: 11px;
        border-radius: 50%;
        background: #0077f9;
      }
    `}
`;

const StyledContent = styled.main`
  display: flex;
  flex-direction: column;
  align-items: center;
  flex: 1;
  margin-left: 127px;
  border-left: 22px solid #edf0f6;
  border-right: 6px solid #edf0f6;
`;

const StyledMap = styled.section`
  position: relative;
  flex: none;
  width: 880px;
  height: 724px;
  overflow: hidden;
`;

const MapSvg = styled.svg`
  display: block;
  width: 880px;
  height: 724px;
`;

const PlaceName = styled.text<{ $tone?: 'sea' | 'abroad' }>`
  font-size: 13px;
  font-weight: ${({ $tone }) => ($tone === 'abroad' ? 500 : 700)};
  letter-spacing: ${({ $tone }) => ($tone ? 0 : -0.4)}px;
  text-anchor: middle;
  paint-order: stroke;
  stroke: ${({ $tone }) => ($tone === 'sea' ? 'none' : 'rgba(255, 255, 255, 0.85)')};
  stroke-width: 2.5px;
  fill: ${({ $tone }) =>
    $tone === 'sea' ? '#3565a8' : $tone === 'abroad' ? '#858585' : '#404040'};
`;

const StyledLegend = styled.div`
  position: absolute;
  top: -4px;
  left: 826px;
  width: 44px;
  height: 213px;
  padding: 1px 4px 0 3px;
  border: 1px solid #b4b8bb;
  border-right: 2px solid #94989b;
  border-bottom: 2px solid #94989b;
  border-radius: 5px;
  background: #d8dcdf;
  font: 10.5px 'DejaVu Sans', sans-serif;
`;

const StyledLegendScale = styled.div`
  display: flex;
  height: 191px;
  border-bottom: 1px dotted #b5b5b5;
`;

const StyledLegendBar = styled.div`
  display: flex;
  flex-direction: column;
  width: 11px;
`;

const StyledLegendCell = styled.span<{ $color: string }>`
  flex: 1;
  background: ${({ $color }) => $color};
`;

const StyledLegendValues = styled.div`
  display: flex;
  flex-direction: column;
  align-items: center;
  width: 25px;
  padding-top: 5px;
  span {
    height: 55px;
    line-height: 55px;
  }
`;

const StyledLegendUnit = styled.div`
  line-height: 12px;
  text-align: center;
`;

const StyledMapTools = styled.div`
  position: absolute;
  top: 532px;
  right: 3px;
  display: grid;
  gap: 4px;
`;

const StyledPill = styled.div<{ $dark?: boolean }>`
  width: 33px;
  height: 66px;
  border-radius: 17px;
  background: ${({ $dark }) => ($dark ? 'rgba(0, 0, 0, 0.5)' : 'rgba(0, 0, 0, 0.35)')};
`;

const StyledScale = styled.div`
  position: absolute;
  right: 5px;
  bottom: 11px;
  width: 83px;
  height: 28px;
  padding: 3px 4px;
  border-radius: 4px;
  background: #3b4346;
  div {
    height: 22px;
    border: 1px solid #eee;
    border-top: 0;
    font: 10.5px/11px 'DejaVu Sans', sans-serif;
    text-align: center;
    color: #eee;
  }
`;

const StyledControls = styled.div`
  display: flex;
  align-self: stretch;
  height: 44px;
  margin: 33px 0 17px 11px;
`;

const StyledLabel = styled.label<{ $width: number; $gap?: number }>`
  width: ${({ $width }) => $width}px;
  margin-left: ${({ $gap = 0 }) => $gap}px;
  line-height: 41px;
  font-size: 20px;
  font-weight: 500;
  letter-spacing: -0.6px;
`;

const StyledField = styled.div<{ $width: number }>`
  width: ${({ $width }) => $width}px;
  padding-left: 16px;
  border-radius: 5px;
  background: #edf0f6;
  line-height: 47px;
  font-size: 20px;
  letter-spacing: -0.8px;
`;

const StyledStepper = styled.div`
  display: flex;
  gap: 4px;
  margin-left: 11px;
  button {
    display: flex;
    align-items: center;
    justify-content: center;
    width: 44px;
    height: 44px;
    padding: 0;
    border: 0;
    border-radius: 5px;
    background: #ffc600;
  }
`;

const StyledPlayer = styled.div`
  display: flex;
  align-self: stretch;
  align-items: center;
  height: 88px;
  margin: 0 11px;
  padding: 2px 22px 0;
  border-radius: 8px;
  background: #dfe5ef;
`;

const StyledPlay = styled.button`
  display: flex;
  padding: 0;
  border: 0;
  background: none;
`;

const StyledTrack = styled.div`
  position: relative;
  display: flex;
  justify-content: space-between;
  flex: 1;
  height: 6px;
  margin-left: 11px;
  padding-right: 2px;
  background: #fff;
  i {
    width: 2px;
    height: 5px;
    margin-top: 3px;
    background: #cbd3de;
  }
`;

const StyledTooltip = styled.div`
  position: absolute;
  left: -33px;
  top: -39px;
  width: 66px;
  height: 27px;
  border-radius: 3px;
  background: #0070e8;
  color: #fff;
  font-size: 15px;
  font-weight: 300;
  letter-spacing: -0.5px;
  line-height: 23px;
  text-align: center;
  &::after {
    content: '';
    position: absolute;
    left: 27px;
    top: 26px;
    border: 6px solid transparent;
    border-top: 7px solid #0070e8;
    border-bottom: 0;
  }
`;

export default App;
